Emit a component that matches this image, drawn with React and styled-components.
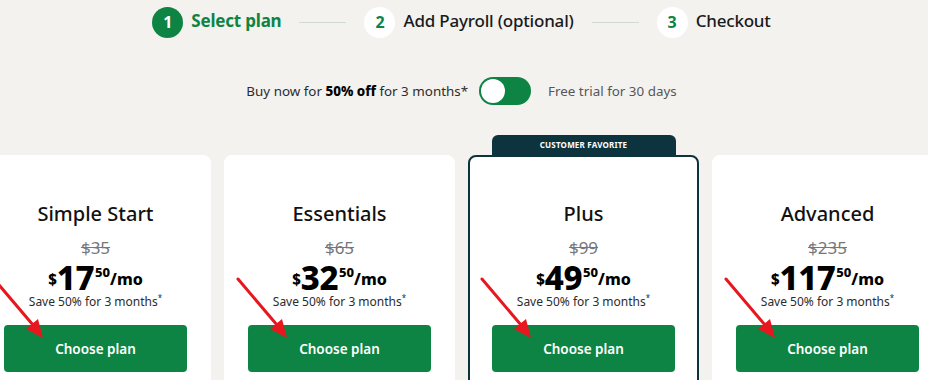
import React from 'react';
import styled, { createGlobalStyle } from 'styled-components';

const GlobalStyle = createGlobalStyle`
  body {
    margin: 0;
    background: #f3f2ef;
    font-family: "Noto Sans", "Open Sans", sans-serif;
    color: #1a1a1a;
  }
`;

const green = '#0d8444';

const plans = [
  { name: 'Simple Start', was: '$35', whole: '17' },
  { name: 'Essentials', was: '$65', whole: '32' },
  { name: 'Plus', was: '$99', whole: '49', favorite: true },
  { name: 'Advanced', was: '$235', whole: '117' }
];

const steps = [
  { n: 1, label: 'Select plan', active: true },
  { n: 2, label: 'Add Payroll (optional)' },
  { n: 3, label: 'Checkout' }
];

const Arrow = () => (
  <ArrowSvg width="70" height="190" viewBox="0 0 70 190">
    <line x1="12" y1="122" x2="51" y2="168" stroke="#e8161e" strokeWidth="3" strokeLinecap="round" />
    <polygon points="61,181 44,172 56,162" fill="#e8161e" />
  </ArrowSvg>
);

const App = () => (
  <Page>
    <GlobalStyle />
    <Stepper>
      {steps.map((s, i) => (
        <React.Fragment key={s.n}>
          {i > 0 && <StepLine />}
          <Step>
            <StepDot active={s.active}>{s.n}</StepDot>
            <StepLabel active={s.active}>{s.label}</StepLabel>
          </Step>
        </React.Fragment>
      ))}
    </Stepper>

    <ToggleRow>
      <OfferText>
        Buy now for <strong>50% off</strong> for 3 months*
      </OfferText>
      <Toggle>
        <Knob />
      </Toggle>
      <TrialText>Free trial for 30 days</TrialText>
    </ToggleRow>

    <Cards>
      {plans.map((p) => (
        <Card key={p.name} favorite={p.favorite}>
          {p.favorite && <Badge>Customer favorite</Badge>}
          <Arrow />
          <PlanName>{p.name}</PlanName>
          <WasPrice>{p.was}</WasPrice>
          <Price>
            <Dollar>$</Dollar>
            <Whole>{p.whole}</Whole>
            <Cents>50</Cents>
            <Per>/mo</Per>
          </Price>
          <Save>
            Save 50% for 3 months<sup>*</sup>
          </Save>
          <ChooseButton>Choose plan</ChooseButton>
        </Card>
      ))}
    </Cards>
  </Page>
);

const Page = styled.div`
  width: 928px;
  height: 380px;
  overflow: hidden;
  box-sizing: border-box;
  padding-right: 5px;
`;

const Stepper = styled.div`
  display: flex;
  justify-content: center;
  align-items: center;
  height: 42px;
  padding-top: 1px;
`;

const Step = styled.div`
  display: flex;
  align-items: center;
  gap: 8px;
`;

const StepDot = styled.div`
  width: 31px;
  height: 31px;
  border-radius: 50%;
  display: flex;
  align-items: center;
  justify-content: center;
  font-size: 16px;
  font-weight: 700;
  background: ${(p) => (p.active ? green : '#fff')};
  color: ${(p) => (p.active ? '#fff' : green)};
`;

const StepLabel = styled.span`
  font-size: 17px;
  line-height: 20px;
  letter-spacing: -0.2px;
  margin-top: -2px;
  font-weight: ${(p) => (p.active ? 700 : 500)};
  color: ${(p) => (p.active ? green : '#1a1a1a')};
`;

const StepLine = styled.div`
  width: 47px;
  height: 1px;
  background: #cfdcd2;
  margin: 0 18px;
`;

const ToggleRow = styled.div`
  display: flex;
  justify-content: center;
  align-items: center;
  margin-top: 34px;
  height: 28px;
  font-size: 13.4px;
`;

const OfferText = styled.span`
  color: #2b2c2e;
  strong {
    font-weight: 800;
    color: #000;
  }
`;

const Toggle = styled.div`
  width: 52px;
  height: 28px;
  border-radius: 14px;
  background: ${green};
  margin: 0 17px 0 11px;
  display: flex;
  align-items: center;
  padding-left: 2px;
  box-sizing: border-box;
`;

const Knob = styled.div`
  width: 24px;
  height: 24px;
  border-radius: 50%;
  background: #fff;
`;

const TrialText = styled.span`
  color: #55575b;
`;

const Cards = styled.div`
  display: flex;
  justify-content: center;
  align-items: flex-start;
  gap: 13px;
  margin-top: 50px;
`;

const Card = styled.div`
  position: relative;
  flex: 0 0 231px;
  box-sizing: border-box;
  height: 260px;
  background: #fff;
  border-radius: 8px;
  border: 2px solid ${(p) => (p.favorite ? '#0d333f' : '#fff')};
  padding: 42px 22px 0;
  text-align: center;
`;

const Badge = styled.div`
  position: absolute;
  top: -22px;
  left: 50%;
  transform: translateX(-50%);
  width: 184px;
  height: 20px;
  border-radius: 6px 6px 0 0;
  background: #0d333f;
  color: #fff;
  font-size: 8px;
  font-weight: 700;
  text-transform: uppercase;
  letter-spacing: 0.2px;
  line-height: 20px;
`;

const ArrowSvg = styled.svg`
  position: absolute;
  left: 0;
  top: 0;
  pointer-events: none;
`;

const PlanName = styled.div`
  font-size: 20px;
  font-weight: 500;
  line-height: 30px;
  color: #111;
`;

const WasPrice = styled.div`
  margin-top: 9px;
  font-size: 17px;
  line-height: 20px;
  color: #75777b;
  text-decoration: line-through;
`;

const Price = styled.div`
  display: flex;
  justify-content: center;
  align-items: baseline;
  height: 32px;
  margin-top: 3px;
  font-weight: 800;
  color: #000;
  white-space: nowrap;
  span {
    line-height: 1;
  }
`;

const Dollar = styled.span`
  font-size: 15px;
  transform: translateY(-5px);
`;

const Whole = styled.span`
  font-size: 33px;
  letter-spacing: -0.5px;
`;

const Cents = styled.span`
  font-size: 13px;
  margin-left: 1px;
  transform: translateY(-13px);
`;

const Per = styled.span`
  font-size: 16px;
  transform: translateY(-5px);
`;

const Save = styled.div`
  font-size: 12px;
  line-height: 18px;
  color: #2b2c2e;
  sup {
    font-size: 8px;
    line-height: 0;
  }
`;

const ChooseButton = styled.button`
  display: block;
  width: 100%;
  height: 47px;
  margin-top: 14px;
  border: none;
  border-radius: 4px;
  background: ${green};
  color: #fff;
  font-family: inherit;
  font-size: 13.5px;
  font-weight: 600;
  cursor: pointer;
`;

export default App;
